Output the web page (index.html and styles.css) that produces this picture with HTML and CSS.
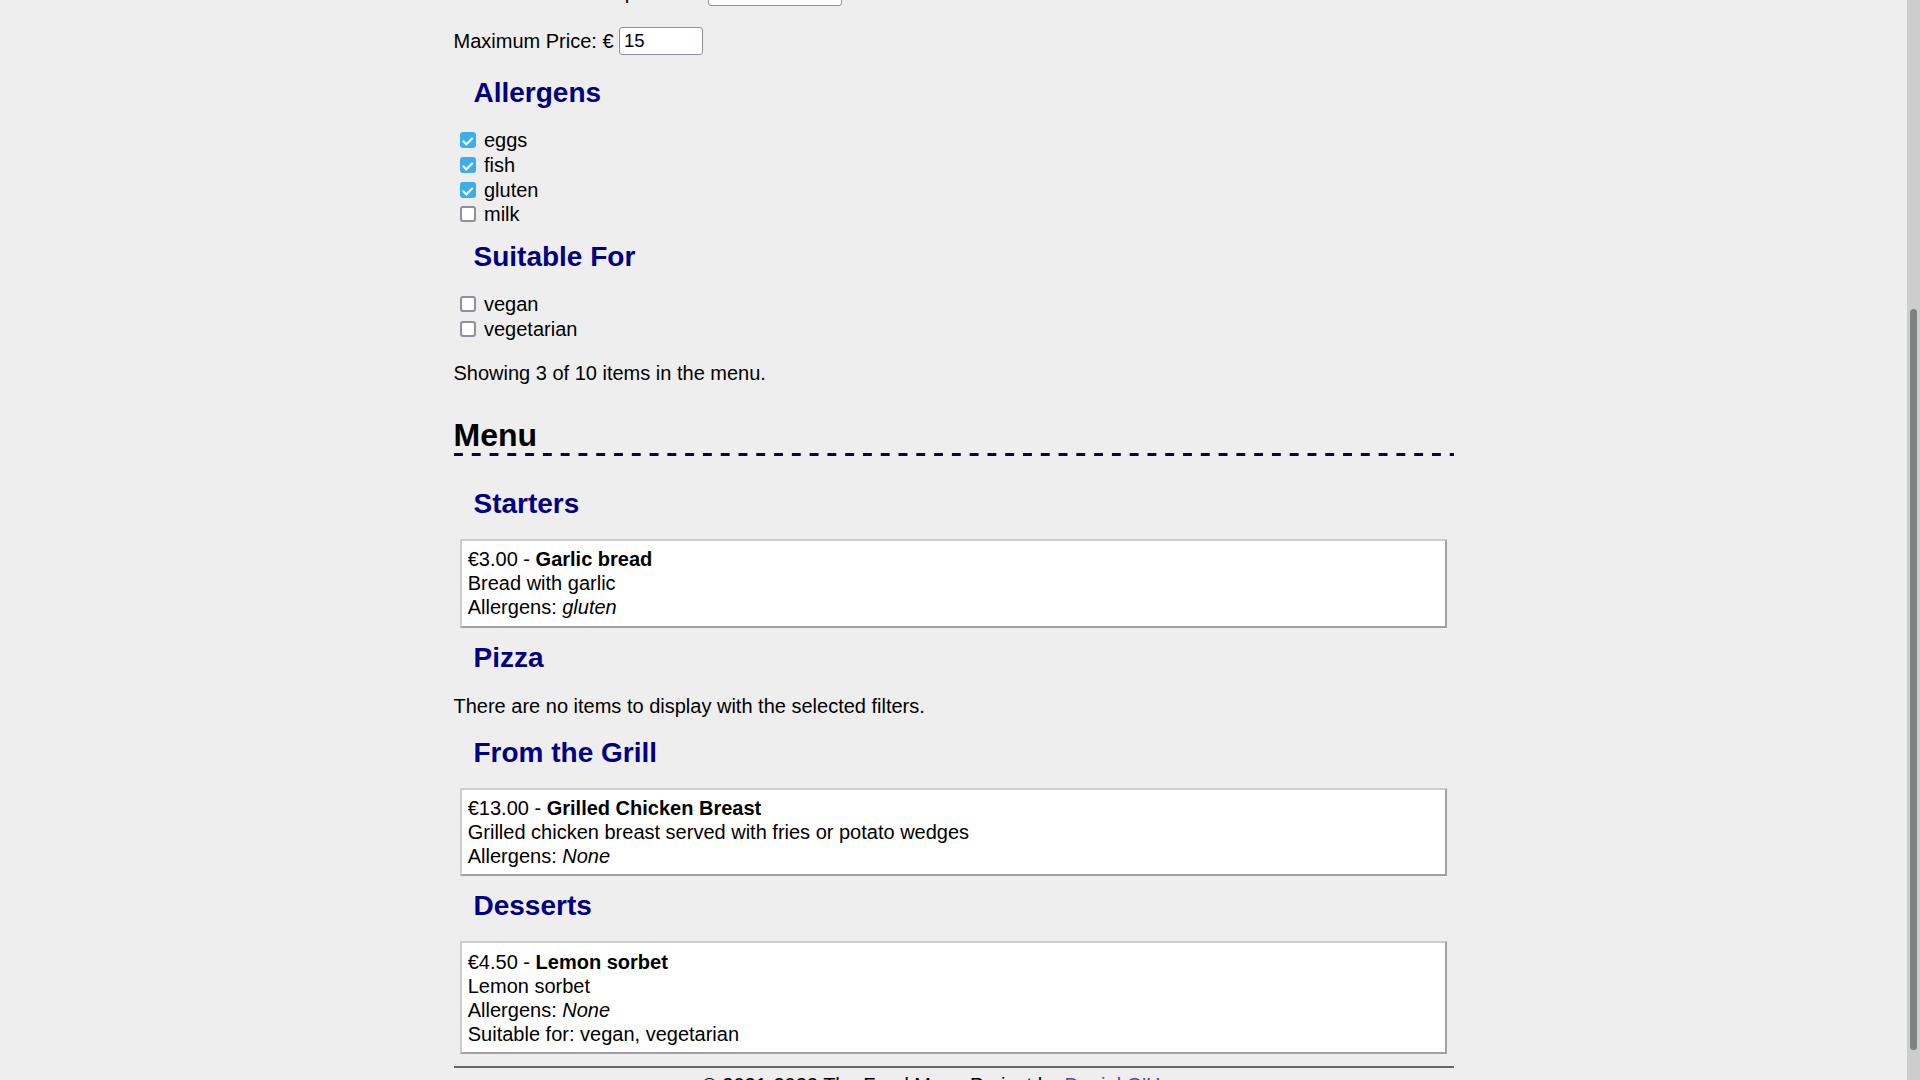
FILE: index.html
```html
<!DOCTYPE html>
<html lang="en">
<head>
<meta charset="utf-8">
<title>The Food Menu</title>
<link rel="stylesheet" href="styles.css">
</head>
<body>
<div class="page">
  <header class="site-header">
    <h1 class="site-title">The Food Menu</h1>
    <p class="intro">Browse our menu and use the filters below to find the dishes that suit you.</p>
    <h2 class="section-title">Filters</h2>
  </header>

  <section class="filters">
    <div class="filter-row">
      <span class="filter-label">Maximum Calories per item:</span>
      <input class="text-input wide" type="number" value="">
    </div>
    <div class="filter-row">
      <span class="filter-label">Maximum Price: €</span>
      <input class="text-input" type="number" value="15">
    </div>

    <h3 class="group-title">Allergens</h3>
    <div class="check-list">
      <label class="check"><input type="checkbox" checked>eggs</label>
      <label class="check"><input type="checkbox" checked>fish</label>
      <label class="check"><input type="checkbox" checked>gluten</label>
      <label class="check"><input type="checkbox">milk</label>
    </div>

    <h3 class="group-title">Suitable For</h3>
    <div class="check-list">
      <label class="check"><input type="checkbox">vegan</label>
      <label class="check"><input type="checkbox">vegetarian</label>
    </div>

    <p class="status">Showing 3 of 10 items in the menu.</p>
  </section>

  <section class="menu">
    <h2 class="section-title">Menu</h2>

    <h3 class="group-title">Starters</h3>
    <div class="item">
      <div>€3.00 - <b>Garlic bread</b></div>
      <div>Bread with garlic</div>
      <div>Allergens: <i>gluten</i></div>
    </div>

    <h3 class="group-title">Pizza</h3>
    <p class="empty">There are no items to display with the selected filters.</p>

    <h3 class="group-title">From the Grill</h3>
    <div class="item">
      <div>€13.00 - <b>Grilled Chicken Breast</b></div>
      <div>Grilled chicken breast served with fries or potato wedges</div>
      <div>Allergens: <i>None</i></div>
    </div>

    <h3 class="group-title">Desserts</h3>
    <div class="item">
      <div>€4.50 - <b>Lemon sorbet</b></div>
      <div>Lemon sorbet</div>
      <div>Allergens: <i>None</i></div>
      <div>Suitable for: vegan, vegetarian</div>
    </div>
  </section>

  <footer class="site-footer">
    <hr class="rule">
    <p class="copyright">© 2021-2022 The Food Menu Project by <a class="author" href="#">Daniel O'Hagan</a></p>
  </footer>
</div>

<div class="scrollbar" aria-hidden="true"><div class="scrollbar-thumb"></div></div>

<script src="script.js"></script>
</body>
</html>
```

FILE: styles.css
```css
html {
  background: #eeeeee;
}

body {
  margin: 0;
  padding-right: 13px;
  background: #eeeeee;
  color: #000;
  font-family: "Liberation Sans", Arial, sans-serif;
  font-size: 20px;
  line-height: 24px;
}

/* window scrollbar (drawn, since the capture hides native ones) */
.scrollbar {
  position: fixed;
  top: 0;
  right: 0;
  width: 13px;
  height: 100vh;
  background: #cdcdcd;
}

.scrollbar-thumb {
  height: 741px;
  margin: 309px 3px 0 3px;
  border-radius: 4px;
  background: #7e8280;
}

.page {
  width: 1000px;
  margin: 0 auto;
  padding-bottom: 28px;
}

/* top part (scrolled out of view) */
.site-header {
  height: 408px;
  margin-bottom: 21px;
  overflow: hidden;
}

.site-title {
  margin: 27px 0 20px;
  font-size: 40px;
  line-height: 46px;
}

.intro {
  margin: 20px 0;
}

.section-title {
  margin: 32px 0 31px;
  padding-bottom: 3px;
  font-size: 32px;
  line-height: 36px;
  font-weight: bold;
  background: linear-gradient(to right, #0a0a28 50%, transparent 50%) left bottom / 17.795px 3px repeat-x;
}

/* filters */
.filter-row {
  display: flex;
  align-items: center;
  height: 28px;
  margin-bottom: 21px;
}

.filter-label {
  margin-right: 5.5px;
  white-space: nowrap;
}

.text-input {
  box-sizing: border-box;
  width: 84px;
  height: 28px;
  padding: 0 4px;
  border: 1px solid #8f8f9d;
  border-radius: 3px;
  background: #fff;
  color: #000;
  font-family: "Liberation Sans", Arial, sans-serif;
  font-size: 18.5px;
  -moz-appearance: textfield;
}

.text-input::-webkit-inner-spin-button,
.text-input::-webkit-outer-spin-button {
  -webkit-appearance: none;
  margin: 0;
}

.text-input.wide {
  width: 134px;
}

.group-title {
  margin: 13px 0 19px;
  padding: 1px 0 0 20px;
  color: #000080;
  font-size: 28px;
  line-height: 32px;
  font-weight: bold;
}

.check {
  display: flex;
  align-items: center;
  height: 24.67px;
}

.check input {
  -webkit-appearance: none;
  appearance: none;
  position: relative;
  flex: none;
  box-sizing: border-box;
  width: 16px;
  height: 16px;
  margin: 0 8.5px 0 6px;
  border: 2px solid #8f8f9d;
  border-radius: 3px;
  background: #fff;
}

.check input:checked {
  background: #3daee9;
  border-color: #3daee9;
}

.check input:checked::after {
  content: "";
  position: absolute;
  left: 3.5px;
  top: 1px;
  width: 3.5px;
  height: 7.5px;
  border: solid #fff;
  border-width: 0 2px 2px 0;
  transform: rotate(45deg);
}

.status {
  margin: 20px 0;
}

/* menu */
.item {
  margin: 0 6.25px;
  padding: 6.5px 6px 6.25px;
  background: #fff;
  border: 2px solid;
  border-color: #cdcdcd #a0a0a0 #a0a0a0 #cdcdcd;
}

.empty {
  margin: 20px 0 18px;
}

/* footer */
.rule {
  height: 0;
  margin: 12px 0 5px;
  border: 0;
  border-top: 2px solid #666666;
}

.copyright {
  margin: 0;
  text-align: center;
}

.author {
  color: #5b3f9e;
  text-decoration: none;
}
```

FILE: script.js
```js
function placeView() {
  window.scrollTo(0, 451);
}
placeView();
window.addEventListener("load", placeView);
```
